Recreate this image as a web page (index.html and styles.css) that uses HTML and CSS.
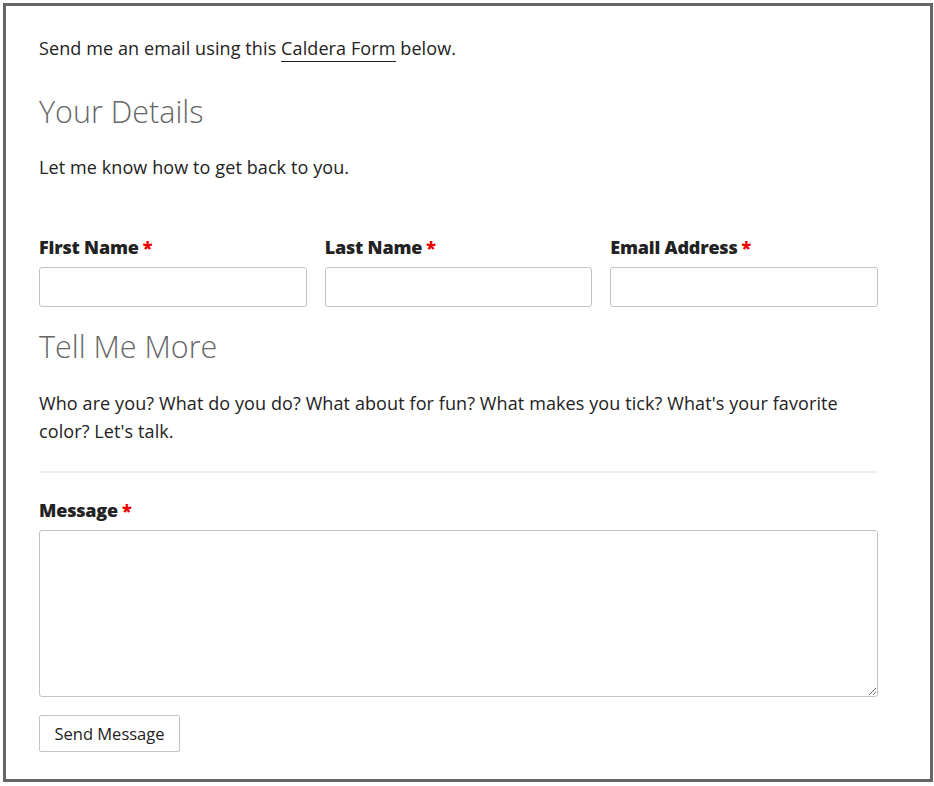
FILE: index.html
```html
<!DOCTYPE html>
<html lang="en">
<head>
<meta charset="utf-8">
<title>Contact</title>
<link rel="stylesheet" href="styles.css">
</head>
<body>
<div class="frame">
  <p class="intro">Send me an email using this <a href="#">Caldera Form</a> below.</p>
  <h2 class="section-title first">Your Details</h2>
  <p class="section-desc">Let me know how to get back to you.</p>
  <div class="row">
    <div class="field">
      <label class="label">First Name<span class="req">*</span></label>
      <input class="input" type="text">
    </div>
    <div class="field">
      <label class="label">Last Name<span class="req">*</span></label>
      <input class="input" type="text">
    </div>
    <div class="field">
      <label class="label">Email Address<span class="req">*</span></label>
      <input class="input" type="email">
    </div>
  </div>
  <h2 class="section-title second">Tell Me More</h2>
  <p class="section-desc long">Who are you? What do you do? What about for fun? What makes you tick? What's your favorite color? Let's talk.</p>
  <hr class="divider">
  <div class="field">
    <label class="label">Message<span class="req">*</span></label>
    <textarea class="textarea"></textarea>
  </div>
  <button class="btn" type="button">Send Message</button>
</div>
</body>
</html>
```
FILE: styles.css
```css
html, body {
  margin: 0;
  padding: 0;
  background: #fff;
}
body {
  font-family: "Open Sans", "Liberation Sans", sans-serif;
  color: #222;
}
.frame {
  margin: 3px;
  border: 3px solid #666;
  padding: 28px 52px 0 33px;
  box-sizing: content-box;
  width: 839px;
  height: 745px;
}
.intro {
  margin: 0;
  font-size: 18px;
  line-height: 28px;
  letter-spacing: 0.1px;
}
.intro a {
  color: #222;
  text-decoration: none;
  border-bottom: 1px solid #222;
  padding-bottom: 1px;
}
.section-title {
  margin: 0;
  font-size: 30.5px;
  line-height: 40px;
  font-weight: 300;
  color: #666;
}
.section-title.first { margin-top: 29px; }
.section-title.second { margin-top: 19px; }
.section-desc {
  margin: 22px 0 0;
  font-size: 18px;
  line-height: 28px;
  letter-spacing: 0.1px;
}
.section-desc.long { margin-top: 23px; }
.row {
  display: grid;
  grid-template-columns: 1fr 1fr 1fr;
  gap: 18px;
  margin-top: 54px;
}
.field {
  display: flex;
  flex-direction: column;
}
.label {
  font-size: 18px;
  line-height: 24px;
  font-weight: 800;
  color: #222;
  margin-bottom: 8px;
  letter-spacing: -0.2px;
}
.req {
  color: #e00;
  margin-left: 4px;
}
.input {
  height: 40px;
  box-sizing: border-box;
  border: 1px solid #c4c4c4;
  border-radius: 3px;
  margin: 0;
  background: #fff;
}
.divider {
  border: 0;
  border-top: 2px solid #eee;
  margin: 26px 0 25px;
}
.textarea {
  height: 167px;
  box-sizing: border-box;
  border: 1px solid #c4c4c4;
  border-radius: 3px;
  margin: 0;
  background: #fff;
}
.btn {
  margin-top: 18px;
  width: 141px;
  height: 37px;
  background: #fff;
  border: 1px solid #c4c4c4;
  border-radius: 2px;
  font-family: "Open Sans", "Liberation Sans", sans-serif;
  font-size: 16.5px;
  color: #222;
  padding: 0;
}
```
